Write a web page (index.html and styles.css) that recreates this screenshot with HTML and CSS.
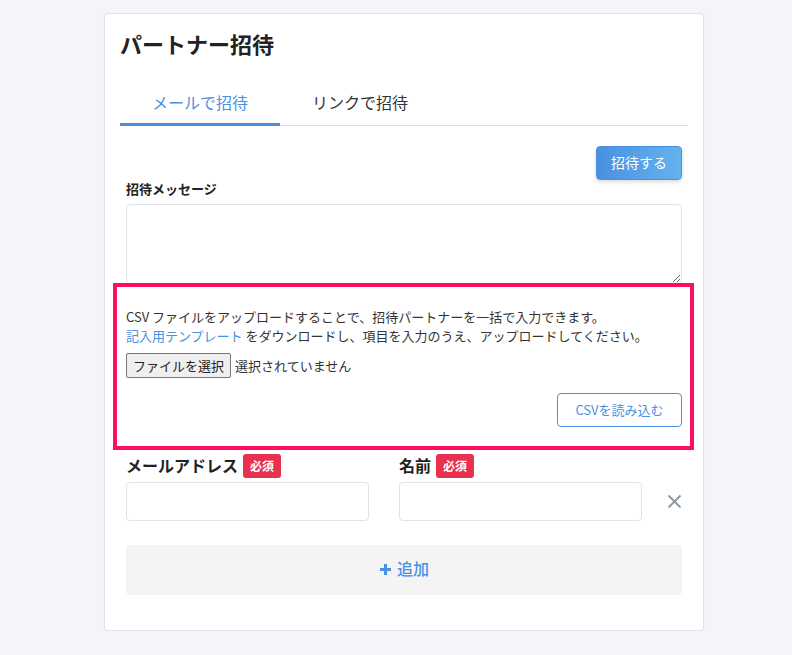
FILE: index.html
```html
<!DOCTYPE html>
<html lang="ja">
<head>
    <meta charset="UTF-8">
    <meta name="viewport" content="width=device-width, initial-scale=1.0">
    <title>パートナー招待</title>
    <link rel="stylesheet" href="styles.css">
</head>
<body>
    <div class="card">
        <div class="card-header">
            <h1 class="title">パートナー招待</h1>
            <div class="tabs">
                <div class="tab active">メールで招待</div>
                <div class="tab">リンクで招待</div>
            </div>
        </div>

        <div class="card-body">
            <div class="actions">
                <button class="btn-primary">招待する</button>
            </div>

            <label class="field-label">招待メッセージ</label>
            <textarea class="message"></textarea>

            <!-- CSV upload -->
            <div class="csv-box">
                <p>CSV ファイルをアップロードすることで、招待パートナーを一括で入力できます。</p>
                <p><a href="#" class="link">記入用テンプレート</a> をダウンロードし、項目を入力のうえ、アップロードしてください。</p>
                <div class="file-row">
                    <span class="file-btn">ファイルを選択</span>
                    <span class="file-name">選択されていません</span>
                </div>
                <div class="csv-actions">
                    <button class="btn-outline">CSVを読み込む</button>
                </div>
            </div>

            <div class="partner-row">
                <div class="field">
                    <div class="label-row">
                        <span class="label-text">メールアドレス</span>
                        <span class="badge">必須</span>
                    </div>
                    <input type="text" class="input">
                </div>
                <div class="field">
                    <div class="label-row">
                        <span class="label-text">名前</span>
                        <span class="badge">必須</span>
                    </div>
                    <input type="text" class="input">
                </div>
                <div class="remove">
                    <svg width="15" height="15" viewBox="0 0 15 15">
                        <path d="M1.5 1.5 L13.5 13.5 M13.5 1.5 L1.5 13.5" stroke="#8c96a0" stroke-width="1.8" fill="none"/>
                    </svg>
                </div>
            </div>

            <button class="btn-add">
                <svg width="13" height="13" viewBox="0 0 13 13">
                    <path d="M6.5 1 V12 M1 6.5 H12" stroke="#4a90e2" stroke-width="3" fill="none"/>
                </svg>
                追加
            </button>
        </div>
    </div>
</body>
</html>
```

FILE: styles.css
```css
* {
    margin: 0;
    padding: 0;
    box-sizing: border-box;
    font-family: 'Noto Sans CJK JP', 'Noto Sans', sans-serif;
}

body {
    background-color: #f4f5f9;
    color: #333;
    padding: 13px 0 0 104px;
}

.card {
    width: 600px;
    background: #fff;
    border: 1px solid #e0e2e6;
    border-radius: 4px;
    box-shadow: 0 1px 2px rgba(0, 0, 0, 0.04);
}

.card-header {
    padding: 16px 15px 0 15px;
}

.title {
    font-size: 22px;
    line-height: 26px;
    font-weight: 700;
    color: #222;
    margin-bottom: 25px;
}

.tabs {
    display: flex;
    border-bottom: 1px solid #dcdcdc;
}

.tab {
    width: 160px;
    height: 45px;
    margin-bottom: -1px;
    text-align: center;
    font-size: 16px;
    line-height: 42px;
    color: #333;
    border-bottom: 3px solid transparent;
}

.tab.active {
    color: #4a90e2;
    border-bottom-color: #4a90e2;
}

.card-body {
    padding: 20px 21px 35px 21px;
}

.actions {
    display: flex;
    justify-content: flex-end;
}

.btn-primary {
    width: 86px;
    height: 34px;
    border: 1px solid #4a90e2;
    border-radius: 4px;
    background: linear-gradient(90deg, #4a90e2, #63b3ed);
    color: #fff;
    font-size: 14px;
    padding-bottom: 2px;
    box-shadow: 0 2px 4px rgba(0, 0, 0, 0.15);
}

.field-label {
    display: block;
    font-size: 13px;
    line-height: 18px;
    font-weight: 700;
    color: #222;
    margin-bottom: 6px;
}

.message {
    display: block;
    width: 100%;
    height: 80px;
    border: 1px solid #dde5e8;
    border-radius: 4px;
    resize: vertical;
}

/* CSV upload box */
.csv-box {
    margin: -1px -12px 0 -13px;
    border: 4px solid #ff0f5a;
    padding: 20px 8px 19px 9px;
    font-size: 13px;
    line-height: 19px;
    color: #333;
}

.link {
    color: #4a90e2;
    text-decoration: none;
}

.file-row {
    display: flex;
    align-items: center;
    margin-top: 8px;
}

.file-btn {
    height: 25px;
    padding: 0 6px;
    line-height: 23px;
    border: 1px solid #767676;
    border-radius: 2px;
    background: #efefef;
    color: #222;
    font-size: 13px;
}

.file-name {
    margin-left: 4px;
    color: #333;
}

.csv-actions {
    display: flex;
    justify-content: flex-end;
    margin-top: 15px;
}

.btn-outline {
    width: 125px;
    height: 34px;
    background: #fff;
    border: 1px solid #4a90e2;
    border-radius: 4px;
    color: #4a90e2;
    font-size: 13px;
    padding-bottom: 2px;
}

/* partner rows */
.partner-row {
    display: flex;
    align-items: flex-end;
    gap: 30px;
    margin-top: 4px;
}

.field {
    flex: 1;
}

.label-row {
    display: flex;
    align-items: center;
    gap: 5px;
    height: 24px;
    margin-bottom: 4px;
}

.label-text {
    font-size: 16px;
    line-height: 20px;
    font-weight: 700;
    color: #222;
    margin-bottom: 2px;
}

.badge {
    height: 24px;
    padding: 0 7px;
    line-height: 23px;
    border-radius: 3px;
    background: #e8304f;
    color: #fff;
    font-size: 12px;
    font-weight: 700;
}

.input {
    display: block;
    width: 100%;
    height: 39px;
    border: 1px solid #dde5e8;
    border-radius: 4px;
}

.remove {
    width: 40px;
    height: 39px;
    margin-left: -30px;
    display: flex;
    align-items: center;
    justify-content: flex-end;
}

.btn-add {
    display: flex;
    align-items: center;
    justify-content: center;
    gap: 5px;
    width: 100%;
    height: 50px;
    margin-top: 24px;
    padding-bottom: 4px;
    border: none;
    border-radius: 4px;
    background: #f4f4f4;
    color: #4a90e2;
    font-size: 16px;
    font-weight: 500;
}

.btn-add svg {
    margin-top: 3px;
}
```
